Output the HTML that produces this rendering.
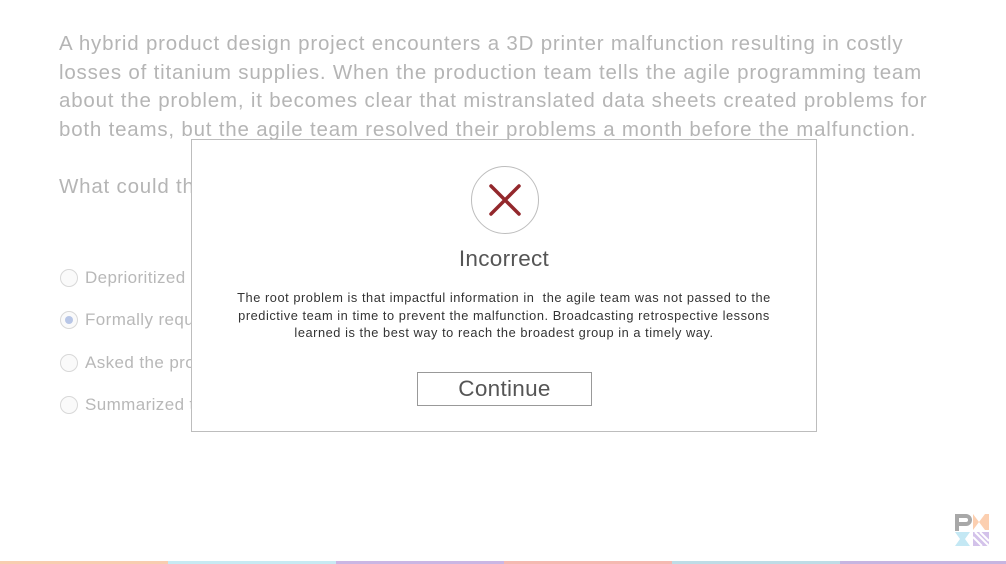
<!DOCTYPE html>
<html><head><meta charset="utf-8"><style>
body{margin:0;width:1006px;height:564px;overflow:hidden;background:#fff;position:relative;font-family:"Liberation Sans",sans-serif}
.q{position:absolute;left:59px;top:30px;width:950px;white-space:nowrap;font-size:20.5px;line-height:28.5px;color:#b5b5b5;letter-spacing:0.8px}
.opt{position:absolute;left:60px;font-size:17px;color:#b8b8b8;display:flex;align-items:center;letter-spacing:0.4px}
.opt i{display:inline-block;width:18px;height:18px;border:1px solid #d8d8d8;border-radius:50%;margin-right:7px;box-sizing:border-box;position:relative;background:#fafafa}
.opt i.s::after{content:"";position:absolute;left:4px;top:4px;width:8px;height:8px;border-radius:50%;background:#b8c6e6}
.modal{position:absolute;left:191px;top:139px;width:624px;height:291px;border:1px solid #bdbdbd;background:#fff}
.circ{position:absolute;left:279px;top:26px;width:68px;height:68px;border:1px solid #bdbdbd;border-radius:50%;box-sizing:border-box}
.t{position:absolute;left:0;width:100%;text-align:center;top:106px;font-size:22.5px;color:#555;letter-spacing:0.3px}
.b{position:absolute;left:0;width:624px;text-align:center;top:149px;font-size:12.8px;line-height:17.5px;color:#333;white-space:nowrap;letter-spacing:0.55px}
.btn{position:absolute;left:225px;top:232px;width:175px;height:34px;border:1px solid #999;box-sizing:border-box;text-align:center;font-size:22.5px;line-height:32px;color:#555;letter-spacing:0.3px}
.bar{position:absolute;bottom:0;height:3px;width:168px}
</style></head><body>
<div class="q">A hybrid product design project encounters a 3D printer malfunction resulting in costly<br>losses of titanium supplies. When the production team tells the agile programming team<br>about the problem, it becomes clear that mistranslated data sheets created problems for<br>both teams, but the agile team resolved their problems a month before the malfunction.</div>
<div class="q" style="top:173px">What could the</div>
<div class="opt" style="top:268px"><i></i>Deprioritized</div>
<div class="opt" style="top:310px"><i class="s"></i>Formally requ</div>
<div class="opt" style="top:353px"><i></i>Asked the pro</div>
<div class="opt" style="top:395px"><i></i>Summarized t</div>
<div class="modal">
<div class="circ"><svg width="66" height="66" viewBox="0 0 66 66"><path d="M19 19L47 47M47 19L19 47" stroke="#93282c" stroke-width="3.5" stroke-linecap="round"/></svg></div>
<div class="t">Incorrect</div>
<div class="b">The root problem is that impactful information in&nbsp; the agile team was not passed to the<br>predictive team in time to prevent the malfunction. Broadcasting retrospective lessons<br>learned is the best way to reach the broadest group in a timely way.</div>
<div class="btn">Continue</div>
</div>
<svg style="position:absolute;left:953px;top:512px" width="38" height="36" viewBox="0 0 38 36">
<path d="M2 2h11a6 6 0 0 1 0 12H6v5H2z M6 6v4h7a2 2 0 0 0 0-4z" fill="#a8a8a8" fill-rule="evenodd"/>
<path d="M20 2l6 8 6-8h4v16h-4l-6-8-6 8z" fill="#fccfb0"/>
<path d="M2 20h15l-5 7 5 7H2l5-7z" fill="#c4e8f4"/>
<path d="M20 20h16v14H20z" fill="#d3c2ea"/>
<path d="M22 20l14 14M27 20l9 9M20 25l9 9" stroke="#fff" stroke-width="2"/>
</svg>
<div class="bar" style="left:0;background:#f8cdb0"></div>
<div class="bar" style="left:168px;background:#c8eaf3"></div>
<div class="bar" style="left:336px;background:#cbb6e4"></div>
<div class="bar" style="left:504px;background:#f5b9b1"></div>
<div class="bar" style="left:672px;background:#bfdce6"></div>
<div class="bar" style="left:840px;background:#c7b5e1"></div>
</body></html>
